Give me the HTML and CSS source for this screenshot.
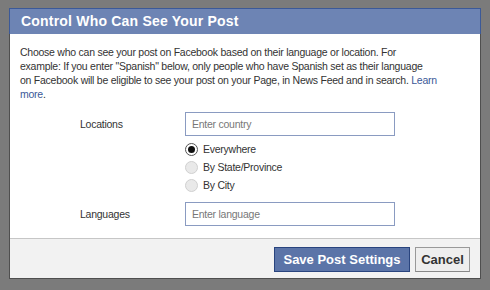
FILE: index.html
```html
<!DOCTYPE html>
<html>
<head>
<meta charset="utf-8">
<link rel="stylesheet" href="styles.css">
</head>
<body>
<div class="stage">
  <div class="dialog">
    <div class="header">Control Who Can See Your Post</div>
    <div class="content">
      <p class="intro">Choose who can see your post on Facebook based on their language or location. For<br>example: If you enter "Spanish" below, only people who have Spanish set as their language<br>on Facebook will be eligible to see your post on your Page, in News Feed and in search. <a class="link" href="#">Learn<br>more</a>.</p>
      <div class="row">
        <div class="label">Locations</div>
        <div class="field"><span class="placeholder">Enter country</span></div>
      </div>
      <div class="options">
        <div class="option"><span class="radio checked"></span><span>Everywhere</span></div>
        <div class="option"><span class="radio"></span><span>By State/Province</span></div>
        <div class="option"><span class="radio"></span><span>By City</span></div>
      </div>
      <div class="row row-lang">
        <div class="label">Languages</div>
        <div class="field"><span class="placeholder">Enter language</span></div>
      </div>
    </div>
    <div class="footer">
      <button class="btn btn-primary">Save Post Settings</button>
      <button class="btn btn-cancel">Cancel</button>
    </div>
  </div>
</div>
</body>
</html>
```
FILE: styles.css
```css
html, body {
  margin: 0;
  padding: 0;
  background: #7b7b7b;
  font-family: "Liberation Sans", Arial, sans-serif;
}
.stage {
  padding: 8px 0 0 9px;
  width: 490px;
  height: 290px;
  box-sizing: border-box;
}
.dialog {
  width: 472px;
  box-sizing: border-box;
  background: #fff;
  border: 1px solid #4f4f4f;
  border-top: none;
}
.header {
  height: 26px;
  box-sizing: border-box;
  margin: 0 -1px;
  background: #6d84b4;
  border: 1px solid #3b5998;
  border-bottom: none;
  color: #fff;
  font-weight: bold;
  font-size: 14px;
  letter-spacing: 0.2px;
  line-height: 25px;
  padding-left: 11px;
}
.content {
  padding: 11px 10px 12px 10px;
  color: #333;
  font-size: 10.5px;
  letter-spacing: -0.25px;
}
.intro {
  margin: 0;
  line-height: 14px;
  white-space: nowrap;
}
.link {
  color: #3b5998;
  text-decoration: none;
}
.row {
  display: flex;
  align-items: center;
  margin-top: 11px;
}
.row-lang {
  margin-top: 8px;
}
.label {
  width: 105px;
  padding-left: 60px;
  color: #333;
}
.field {
  width: 210px;
  height: 24px;
  box-sizing: border-box;
  border: 1px solid #8a9bc1;
  display: flex;
  align-items: center;
  padding-left: 6px;
}
.placeholder {
  color: #777;
}
.options {
  margin-top: 4px;
  padding-left: 165px;
}
.option {
  height: 18px;
  display: flex;
  align-items: center;
  gap: 5px;
  color: #333;
}
.radio {
  width: 13px;
  height: 13px;
  box-sizing: border-box;
  border-radius: 50%;
  border: 1px solid #d0d0d0;
  background: #e9e9e9;
  position: relative;
}
.radio.checked {
  border: 1px solid #555;
  background: #fff;
}
.radio.checked::after {
  content: "";
  position: absolute;
  left: 2px;
  top: 2px;
  width: 7px;
  height: 7px;
  border-radius: 50%;
  background: #111;
}
.footer {
  background: #f2f2f2;
  border-top: 1px solid #c6c6c6;
  height: 40px;
  box-sizing: border-box;
  display: flex;
  justify-content: flex-end;
  align-items: flex-start;
  gap: 5px;
  padding: 8px 10px 0 0;
}
.btn {
  height: 25px;
  box-sizing: border-box;
  font-family: "Liberation Sans", Arial, sans-serif;
  font-weight: bold;
  font-size: 13px;
  margin: 0;
  padding: 0;
  cursor: pointer;
}
.btn-primary {
  width: 136px;
  background: #5b74a8;
  border: 1px solid #29447e;
  color: #fff;
}
.btn-cancel {
  width: 55px;
  background: #eeeeee;
  border: 1px solid #999;
  border-bottom-color: #888;
  color: #333;
}
```
